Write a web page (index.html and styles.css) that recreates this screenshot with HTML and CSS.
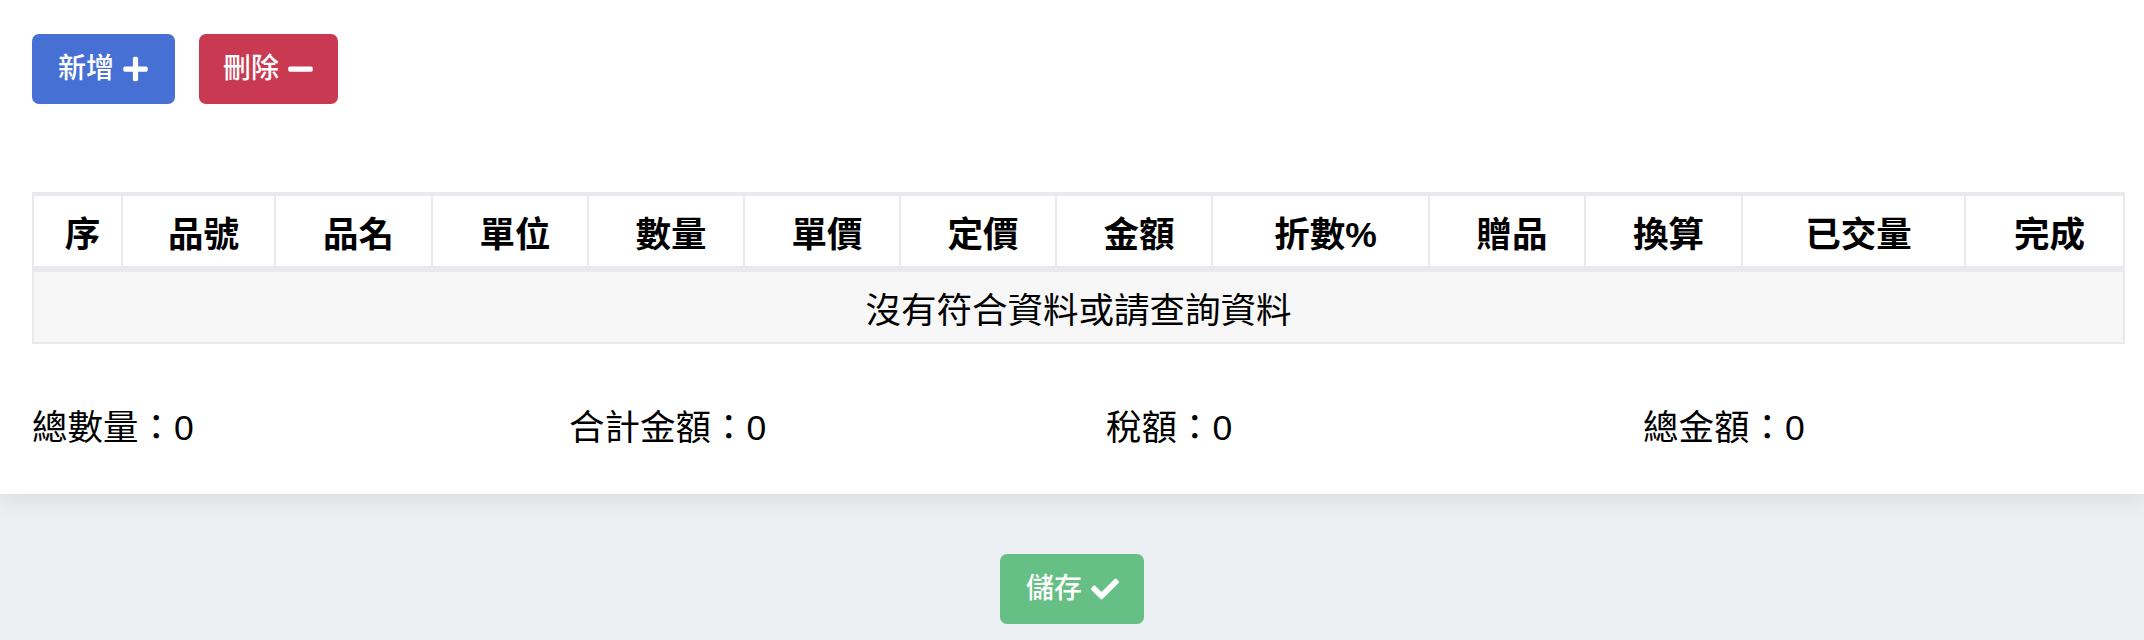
FILE: index.html
```html
<!DOCTYPE html>
<html lang="zh-Hant">
<head>
<meta charset="utf-8">
<title>訂單明細</title>
<link rel="stylesheet" href="styles.css">
</head>
<body>
<div class="card">
  <div class="toolbar">
    <button class="btn btn-add">新增<svg class="ico" viewBox="0 0 448 512"><path d="M416 208H272V64c0-17.67-14.33-32-32-32h-32c-17.67 0-32 14.33-32 32v144H32c-17.67 0-32 14.33-32 32v32c0 17.67 14.33 32 32 32h144v144c0 17.67 14.33 32 32 32h32c17.67 0 32-14.33 32-32V304h144c17.67 0 32-14.33 32-32v-32c0-17.67-14.33-32-32-32z"/></svg></button>
    <button class="btn btn-del">刪除<svg class="ico" viewBox="0 0 448 512"><path d="M416 208H32c-17.67 0-32 14.33-32 32v32c0 17.67 14.33 32 32 32h384c17.67 0 32-14.33 32-32v-32c0-17.67-14.33-32-32-32z"/></svg></button>
  </div>
  <table class="grid">
    <colgroup>
      <col class="c87"><col class="c153"><col class="c157"><col class="c156"><col class="c156"><col class="c156"><col class="c156"><col class="c156"><col class="c217"><col class="c156"><col class="c157"><col class="c223"><col class="c159">
    </colgroup>
    <thead>
      <tr>
        <th>序</th><th>品號</th><th>品名</th><th>單位</th><th>數量</th><th>單價</th><th>定價</th><th>金額</th><th>折數%</th><th>贈品</th><th>換算</th><th>已交量</th><th>完成</th>
      </tr>
    </thead>
    <tbody>
      <tr><td class="empty" colspan="13">沒有符合資料或請查詢資料</td></tr>
    </tbody>
  </table>
  <div class="summary">
    <div class="sum-item">總數量：0</div>
    <div class="sum-item">合計金額：0</div>
    <div class="sum-item">稅額：0</div>
    <div class="sum-item">總金額：0</div>
  </div>
</div>
<div class="footer">
  <button class="btn btn-save">儲存<svg class="ico ico-check" viewBox="0 0 512 512"><path d="M173.898 439.404l-166.4-166.4c-9.997-9.997-9.997-26.206 0-36.204l36.203-36.204c9.997-9.998 26.207-9.998 36.204 0L192 312.69 432.095 72.596c9.997-9.997 26.207-9.997 36.204 0l36.203 36.204c9.997 9.997 9.997 26.206 0 36.204l-294.4 294.401c-9.998 9.997-26.207 9.997-36.204-.001z"/></svg></button>
</div>
</body>
</html>
```
FILE: styles.css
```css
* { box-sizing: border-box; }
html, body { margin: 0; padding: 0; }
body {
  background: #edf0f3;
  font-family: "Liberation Sans", "Noto Sans CJK TC", sans-serif;
  color: #000;
  height: 640px;
  overflow: hidden;
}
.card {
  background: #fff;
  padding: 34px 22px 39px 32px;
  box-shadow: 0 4px 22px rgba(0, 0, 0, 0.10);
  position: relative;
}
.toolbar {
  display: flex;
  gap: 24px;
}
.btn {
  display: inline-flex;
  align-items: center;
  gap: 9px;
  height: 70px;
  padding: 0 27px 0 26px;
  border: none;
  border-radius: 7px;
  color: #fff;
  font-family: "Liberation Sans", "Noto Sans CJK TC", sans-serif;
  font-size: 28px;
  font-weight: 500;
  line-height: 42px;
  white-space: nowrap;
}
.btn-add { background: #4770d4; }
.btn-del { background: #c93a52; padding: 0 25px 0 24px; }
.btn-save { background: #66c086; }
.ico { flex: 0 0 auto; width: 25px; height: 28px; fill: #fff; }
.ico-check { width: 28px; height: 28px; }
.grid {
  margin-top: 88px;
  width: 2090px;
  border-collapse: separate;
  border-spacing: 0;
  border: 2px solid #e8eaed;
  border-top-width: 4px;
  table-layout: fixed;
  font-size: 35.5px;
}
.c87 { width: 87px; } .c153 { width: 153px; } .c156 { width: 156px; }
.c157 { width: 157px; } .c159 { width: 159px; } .c217 { width: 217px; }
.c223 { width: 223px; }
.grid th {
  height: 76px;
  padding: 0 0 0 10px;
  font-weight: 700;
  text-align: center;
  background: #fff;
  border-left: 2px solid #e8eaed;
  border-bottom: 6px solid #e8eaed;
  white-space: nowrap;
}
.grid th:first-child { border-left: none; }
.grid td.empty {
  height: 70px;
  padding: 0;
  text-align: center;
  background: #f7f7f7;
  font-weight: 400;
}
.summary {
  margin-top: 58px;
  display: grid;
  grid-template-columns: repeat(4, 537px);
  font-size: 35.5px;
  line-height: 53px;
}
.footer {
  display: flex;
  justify-content: center;
  padding-top: 60px;
}
.footer .btn { gap: 9px; padding: 0 25px 0 26px; }
```
